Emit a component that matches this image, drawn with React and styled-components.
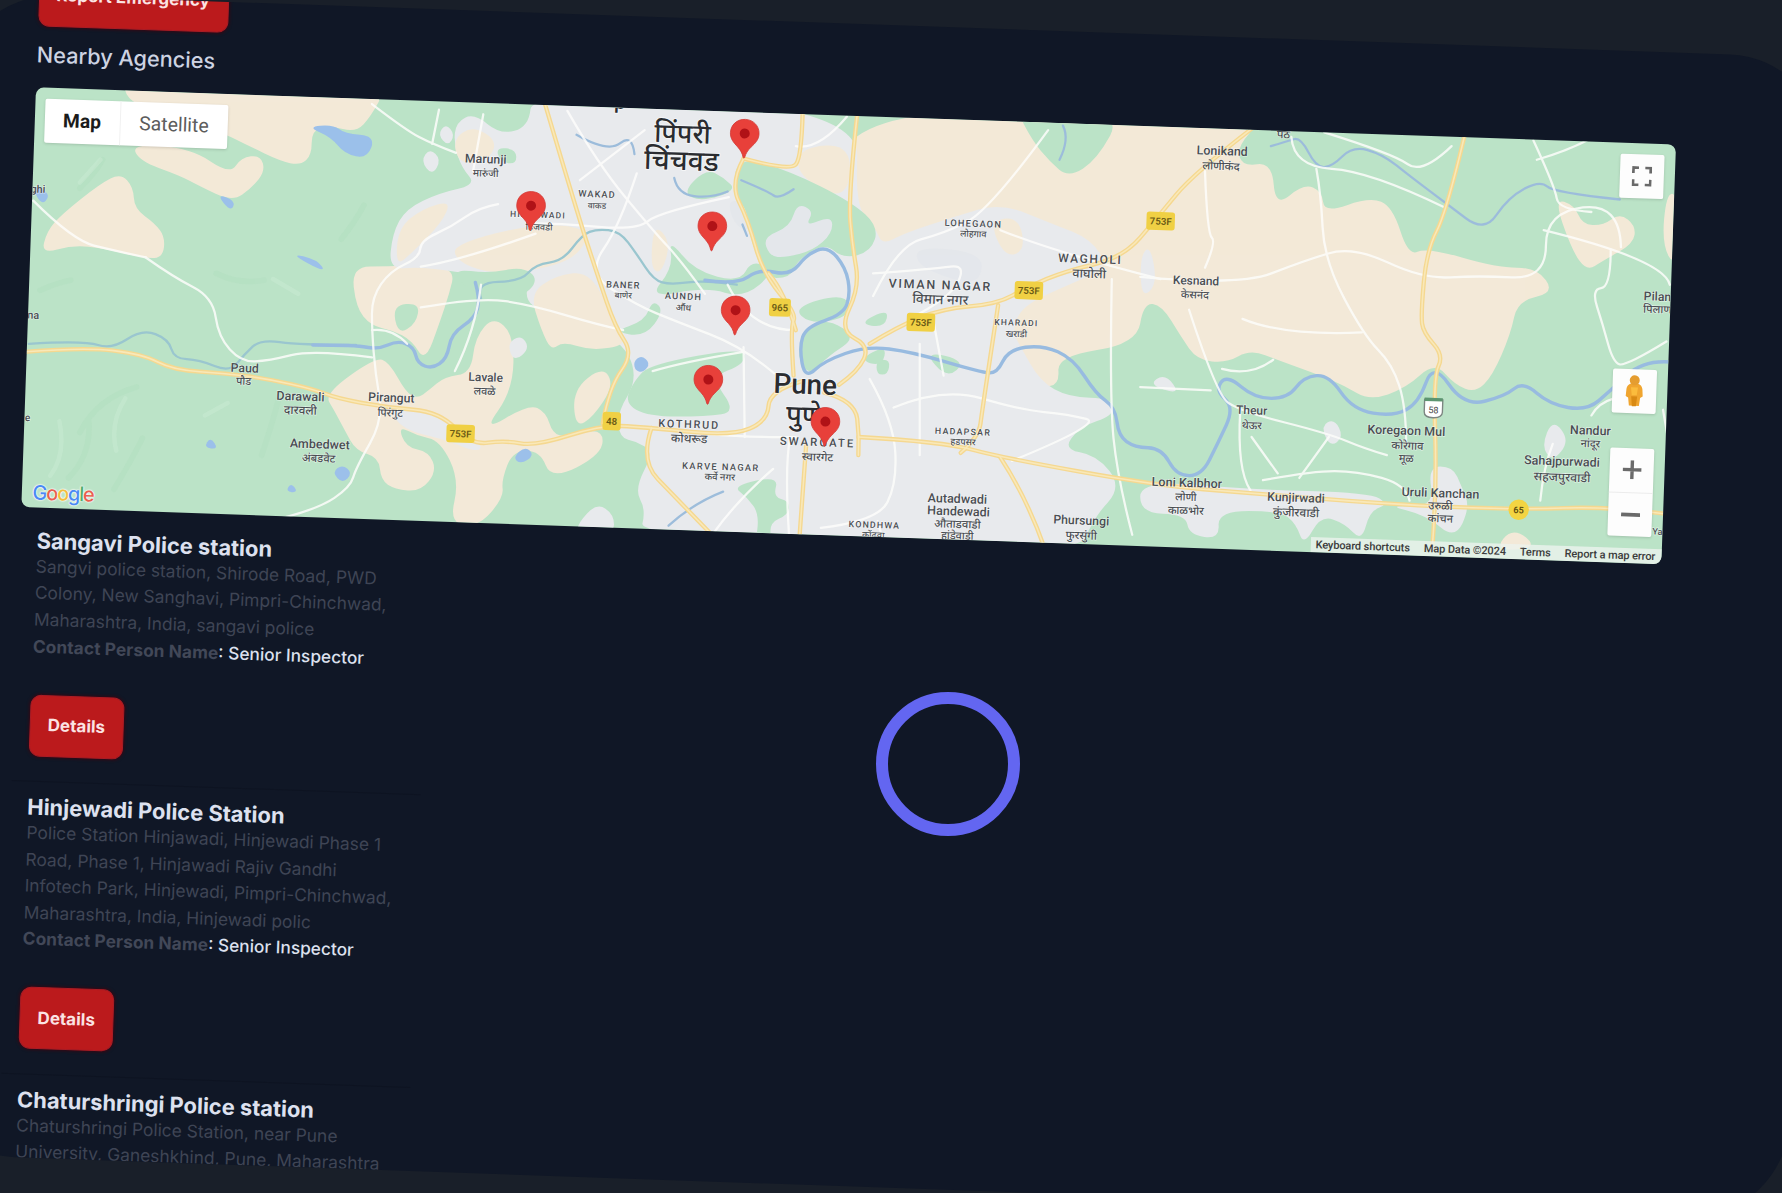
import React from "react";
import styled, { createGlobalStyle } from "styled-components";

const GlobalStyle = createGlobalStyle`
  *, *::before, *::after { box-sizing: border-box; }
  html, body { margin: 0; height: 100%; background: #1a202c; }
`;

const UI_FONT = `Inter, "Liberation Sans", sans-serif`;
const MAP_FONT = `Roboto, "Noto Sans", "Noto Sans Devanagari", sans-serif`;

/* ---------- page shell ---------- */

const Page = styled.main`
  height: 100vh;
  overflow: hidden;
  background: #191f29;
  font-family: ${UI_FONT};
`;

const TiltedPanel = styled.section`
  width: 1868px;
  height: 1162px;
  margin: -6.5px 0 0 -41px;
  padding-left: 79.7px;
  border-radius: 96px;
  overflow: hidden;
  background: #101726;
  transform: rotate(2deg);
  transform-origin: 41px 6.5px;
`;

const Cursor = styled.div`
  position: absolute;
  left: 876.3px;
  top: 692.3px;
  width: 144px;
  height: 144px;
  border: 12px solid #6366f1;
  border-radius: 50%;
`;

const RedButton = styled.button`
  display: flex;
  align-items: center;
  justify-content: center;
  width: ${(p) => p.$width}px;
  height: 62px;
  margin: ${(p) => p.$margin};
  padding: 0 1.5px 1px 0;
  border: 1.5px solid #a91d26;
  border-radius: 11px;
  background: #bb1a1c;
  box-shadow: 0 0 3px 1px rgba(70, 0, 12, 0.7);
  color: #fbe3e3;
  font: 700 17px ${UI_FONT};
`;

const Heading = styled.h2`
  display: flex;
  align-items: center;
  height: 61.4px;
  margin: 0;
  padding-bottom: 4.4px;
  color: #cdd3e2;
  font-size: 21.7px;
  font-weight: 500;
`;

/* ---------- agency cards ---------- */

const AgencyList = styled.div`
  display: flex;
  flex-direction: column;
  width: 409px;
  padding-top: 8.5px;
`;

const AgencyCard = styled.article`
  padding: 12.5px 0 24.8px 16.8px;
  border-bottom: 1px solid #0e1422;
`;

const AgencyName = styled.h3`
  margin: 0;
  color: #dde1ef;
  font-size: 21.9px;
  line-height: 25px;
  font-weight: 700;
  white-space: nowrap;
`;

const Address = styled.p`
  margin: 0;
  color: #3f4555;
  font-size: 17.4px;
  line-height: 26.6px;
  white-space: nowrap;
`;

const AddressLine = styled.span`
  display: block;
`;

const Contact = styled.p`
  margin: 0;
  color: #dde1ef;
  font-size: 17.3px;
  line-height: 26.2px;
  font-weight: 500;
  white-space: nowrap;
`;

const ContactLabel = styled.span`
  color: #424858;
  font-weight: 700;
  letter-spacing: 0.08px;
`;

/* ---------- map ---------- */

const MapFrame = styled.div`
  position: relative;
  width: 1641px;
  height: 420px;
  border-radius: 8px;
  overflow: hidden;
  background: #bbe3c7;
  font-family: ${MAP_FONT};
`;

const MapArt = styled.svg`
  display: block;
  width: 100%;
  height: 100%;
`;

const MapTypeSwitch = styled.div`
  position: absolute;
  left: 10px;
  top: 11.5px;
  display: flex;
  width: 183px;
  height: 44px;
  background: #fff;
  border-radius: 2px;
  box-shadow: 0 1px 3px rgba(0, 0, 0, 0.15);
`;

const MapTypeOption = styled.button`
  width: ${(p) => p.$width}px;
  padding: 0 0 2px;
  border: 0;
  border-left: ${(p) => (p.$active ? "0" : "1px solid #f1f1f1")};
  background: none;
  color: ${(p) => (p.$active ? "#1b1b1b" : "#5c5c5c")};
  font: ${(p) => (p.$active ? 700 : 400)} ${(p) => (p.$active ? 19.2 : 19.4)}px ${MAP_FONT};
`;

const ControlStack = styled.div`
  position: absolute;
  right: 10.4px;
  top: ${(p) => p.$top}px;
  display: flex;
  flex-direction: column;
  width: 44px;
  background: #fdfdfd;
  border-radius: 2px;
  box-shadow: 0 1px 3px rgba(0, 0, 0, 0.15);
`;

const ControlButton = styled.button`
  display: grid;
  place-items: center;
  height: 44px;
  padding: 0;
  border: 0;
  background: none;
  & + & { border-top: 1px solid #ececec; }
`;

const Attribution = styled.div`
  position: absolute;
  right: 0;
  bottom: 0;
  display: flex;
  align-items: center;
  gap: 14px;
  height: 15px;
  padding: 0 6px 0 5px;
  background: rgba(236, 242, 238, 0.8);
  color: #3a3a3a;
  font-size: 11px;
  font-weight: 500;
  letter-spacing: -0.1px;
  white-space: nowrap;
`;

const GoogleMark = styled.div`
  position: absolute;
  left: 11px;
  bottom: 2px;
  font: 500 20px/26px Inter, sans-serif;
  letter-spacing: -1.2px;
  text-shadow: 0 0 2px #fff, 0 0 2px #fff, 0 0 1px #fff;
`;

const Letter = styled.span`
  color: ${(p) => p.$color};
`;

/* Turns a list of points into a softly rounded path through their midpoints. */
function curve(points, closed) {
  const n = points.split(" ").map((p) => p.split(",").map(Number));
  const mid = (a, b) => [(a[0] + b[0]) / 2, (a[1] + b[1]) / 2];
  if (closed) {
    const start = mid(n[n.length - 1], n[0]);
    return (
      `M${start}` +
      n.map((p, i) => `Q${p} ${mid(p, n[(i + 1) % n.length])}`).join("") +
      "Z"
    );
  }
  let d = `M${n[0]}`;
  for (let i = 1; i < n.length - 1; i++) {
    d += `Q${n[i]} ${i === n.length - 2 ? n[i + 1] : mid(n[i], n[i + 1])}`;
  }
  return n.length === 2 ? `M${n[0]}L${n[1]}` : d;
}

const TAN_BACK = [
  "108,66 340,76 326,102 313,116 290,110 274,114 274,136 264,145 246,141 219,128 193,115 112,92",
  "116,126 168,130 202,153 212,138 229,136 233,150 222,164 204,177 175,163 158,154 122,141",
  "36,223 41,203 54,188 88,161 106,152 117,164 118,183 136,196 145,208 143,226 128,227 91,218 64,215",
  "309,234 342,234 372,232 400,237 395,258 387,282 374,318 362,299 345,290 326,286 313,270",
  "285,346 330,314 342,318 357,345 367,350 377,343 391,331 414,328 418,296 434,278 452,294 451,343 424,380 465,355 480,362 486,381 498,384 530,376 530,399 485,422 475,396 451,396 441,422 443,437 421,463 395,460 404,422 387,387 367,383 350,374 357,393 377,397 384,414 370,432 347,430 335,422 333,402 313,396 303,378 294,361",
  "740,90 1110,105 1088,129 1093,146 1119,142 1122,182 1147,161 1163,168 1165,187 1205,173 1225,181 1239,225 1255,217 1317,235 1352,235 1368,257 1335,264 1329,293 1313,330 1298,345 1280,338 1262,318 1237,341 1205,352 1183,339 1162,330 1126,317 1100,307 1079,319 1053,316 1039,296 1022,268 1006,266 1000,302 930,313 932,338 915,340 860,320 760,300 740,200",
  "1367,174 1385,180 1392,197 1410,198 1425,187 1439,198 1437,214 1410,229 1396,238 1383,220",
  "1466,170 1476,170 1474,236 1462,214",
  "1314,484 1331,463 1354,482",
];

const URBAN = [
  "468,80 756,95 752,180 770,200 776,215 795,205 840,190 880,178 925,196 960,210 975,235 940,250 900,268 890,290 898,305 915,335 940,349 978,350 980,365 950,375 935,395 965,400 987,428 962,455 948,490 562,472 568,448 558,430 575,397 560,388 545,385 543,362 560,335 552,306 520,285 478,275 460,262 470,236 431,243 370,234 342,237 345,205 357,183 387,169 419,162 406,147 399,126 401,107 417,99 440,118 465,111",
  "1003,422 1097,430 1205,433 1222,443 1205,449 1198,476 1183,460 1162,453 1147,480 1140,460 1126,449 1071,449 1073,474 1046,470 1043,452 1003,451",
  "1219,444 1262,446 1256,410 1278,410 1286,428 1293,446 1280,474 1255,453",
  "1010,338 1025,328 1039,347",
  "1162,374 1174,368 1182,384 1170,393",
  "1356,392 1366,368 1381,387 1366,406",
  "508,460 525,442 540,452 540,470 508,470",
  "1003,225 1012,215 1018,250 1004,262",
  "340,358 380,362 425,390 420,398 388,385 355,378",
  "385,118 392,108 400,118 394,128",
  "370,141 378,130 388,140 380,154",
  "446,302 458,294 466,306 452,318",
];

const TAN_FRONT = [
  "703,129 750,126 745,178 701,154",
  "350,200 372,183 397,176 388,196 362,222 348,234",
  "400,214 470,196 520,200 508,226 470,238 428,240 400,228",
  "466,258 488,242 520,238 541,286 552,303 520,308 495,300 485,308 476,290",
  "504,342 530,322 540,338 522,366 506,376",
  "575,196 590,212 582,240 572,236",
  "870,194 896,190 902,220 884,226",
  "398,122 416,110 438,124 428,142 404,144",
];

const PARKS = [
  "650,137 695,150 749,177 773,199 766,221 742,227 725,213 701,229 695,244 671,244 659,202 644,165",
  "600,169 621,148 637,156 648,167 617,177",
  "588,209 611,238 651,248 661,228 682,238 654,262 621,252 570,262 592,235",
  "539,291 567,282 574,263 584,273 567,296",
  "572,320 655,305 655,320 625,331 648,362 621,366 570,366 549,354 558,334",
  "644,427 685,418 680,437 694,440 694,452 676,460 680,480 664,480 668,452 657,437",
  "707,288 728,280 754,296 728,313 712,330 701,314",
  "697,270 744,257 749,278 713,285",
  "771,316 783,316 781,329 771,329",
  "812,308 850,317 833,333",
  "755,316 780,303 776,322",
  "755,284 782,271 778,288",
  "893,94 988,98 965,140 940,156 923,141 908,123",
  "436,129 454,131 454,144 440,142",
  "345,268 369,266 366,284 350,294",
  "398,236 430,240 460,234 474,246 458,262 432,262 408,252",
];

const CLEARINGS = [
  "671,208 695,199 701,178 716,185 708,199 732,189 732,205 715,220 691,226 677,225",
  "807,216 865,222 862,248 838,246 806,232",
  "640,175 655,178 660,205 645,196",
];

const LAKES = [
  "270,111 293,109 303,117 330,119 323,139 303,135 291,120",
  "190,170 207,176 203,186",
  "254,222 279,228 287,240",
  "557,318 564,312 572,319 566,327 559,326",
  "292,415 301,408 310,416 301,425",
  "179,393 185,384 192,395",
  "451,402 462,392 470,400 458,408",
  "28,164 35,164 44,172 36,180",
  "251,432 256,424 262,433",
];

const UPPER_RIVERS = [
  "25,302 74,299 98,307 125,289 148,298 153,315 175,316 202,327 215,311 229,298 263,303 313,303",
  "423,262 418,248 458,247 471,232 495,229 512,206 525,201 545,203 560,223 575,246 590,250 620,246 648,250",
];

const RIVERS = [
  "275,303 313,303 332,307 350,299 364,305 367,319 380,324 393,315 397,293 418,279 422,262 418,248",
  "620,246 648,250 668,236 695,242 710,223 728,216 744,235 748,258 742,276 709,287 703,305 708,333 725,317 762,304 802,309 863,327 877,328 887,307 917,303 944,315 964,346 981,358 984,383 998,393 1022,394 1035,418 1057,418 1071,390 1086,358 1069,343 1079,329 1104,350 1133,350 1147,331 1169,329 1190,360 1226,366 1248,354 1261,318 1288,357 1324,348 1340,335 1363,355 1396,361 1417,343 1446,316 1470,318",
];

const STREAMS = [
  "507,118 535,134 556,117 558,135",
  "593,156 596,170 625,174 640,168",
  "652,158 676,168 685,175 698,166",
  "935,110 941,122 932,140",
  "588,462 610,442 636,432",
  "653,197 657,207",
  "1118,128 1132,124 1144,120 1158,147 1172,146 1190,128 1216,135 1241,155 1273,179 1306,204 1327,173 1355,158 1367,169 1425,175",
];

const WHITE_ROADS = [
  "128,226 152,243 187,261 192,296 212,318 236,317 276,307 327,314",
  "438,179 421,182 397,199 370,211 369,226 343,238 327,261 327,290 330,328 337,369 313,411 308,428 280,447 249,455",
  "471,205 404,229 370,234",
  "327,290 345,288 358,302",
  "370,270 421,261 468,268 525,285 548,290",
  "327,91 357,114 380,126 401,134",
  "386,96 380,126",
  "425,100 416,150",
  "29,176 64,211 101,220 128,226",
  "499,97 526,144 574,202 600,230 620,258",
  "567,114 510,158",
  "464,196 493,196 560,202 580,186 641,173",
  "560,152 545,198 516,240 560,268 594,282 654,305 681,328",
  "423,250 418,290 400,326",
  "654,305 655,384",
  "574,326 600,318 654,309",
  "580,375 630,385 700,384",
  "695,384 690,410 694,470",
  "680,412 648,440 628,468",
  "722,464 772,458 789,425 786,370 765,333",
  "772,458 778,480",
  "809,302 809,400",
  "786,358 830,340 897,360 940,364 971,372 890,405",
  "768,260 790,215 830,205 870,185 922,114",
  "880,202 930,222 1021,245",
  "768,240 822,236 850,232 836,262 800,280",
  "820,276 830,330",
  "640,250 660,290 700,290",
  "745,102 720,132 700,128",
  "978,245 976,350 983,420 996,470",
  "1003,243 1090,251 1147,229 1190,216 1252,245 1300,242 1360,245 1360,186 1425,178 1426,217",
  "1417,219 1417,252 1400,254 1410,285 1419,318 1430,322 1466,300",
  "1358,202 1464,228 1469,250",
  "1349,123 1368,164 1371,184 1400,186",
  "1352,140 1380,132 1402,120",
  "1165,116 1226,135 1251,153 1277,128",
  "1136,120 1138,146 1205,150 1271,182",
  "1158,148 1162,170 1165,229 1200,295 1225,320 1237,358 1237,390",
  "1060,150 1062,205 1070,212 1060,235",
  "1046,272 1070,346 1090,361 1169,381 1200,394 1220,400",
  "1093,280 1129,295 1198,292",
  "1003,340 1065,343",
  "1075,324 1100,331 1120,316",
  "1091,361 1088,413 1100,431",
  "1101,384 1124,416",
  "1169,384 1143,420",
  "1111,422 1154,414 1194,414 1237,426 1240,440",
  "1400,365 1406,354 1420,350",
  "1355,440 1358,410 1366,390",
  "1463,360 1470,400",
];

const YELLOW_ROADS = [
  "22,309 74,305 125,311 152,325 199,328 236,333 276,342 296,350 340,358 387,362 414,391 444,387 471,392 530,373 573,376 644,383 675,370 677,343 705,335",
  "479,90 508,188 526,243 541,287 557,311 536,340 530,372",
  "573,376 563,405 594,437 626,470",
  "654,139 695,150 705,138 706,98",
  "654,139 642,161 658,193 671,240 701,276 695,287 698,330",
  "676,240 690,256 700,290",
  "754,100 746,173 750,217 756,252 738,290 765,304 755,326 738,338",
  "765,302 789,287 829,271 877,267 904,252 937,238 988,226 1018,191 1050,152 1102,112",
  "755,384 829,388 880,402 1020,427 1097,433 1219,443 1335,448 1417,445 1468,452",
  "880,402 903,437 919,482",
  "878,268 864,360 861,384 845,398",
  "709,392 703,475",
  "725,345 752,352 756,384 755,400",
  "1290,112 1273,185 1255,220 1250,276 1252,292 1270,312 1261,331 1264,428 1260,482",
];

const LABELS = [
  [427, 143, "Marunji", 10.8],
  [427, 155, "मारुंजी", 9],
  [473, 191, "HINJAWADI", 7.5, 1],
  [474, 202, "हिंजवडी", 8],
  [525, 173, "WAKAD", 8.2, 0.9],
  [525, 183, "वाकड", 7.5],
  [548, 253, "BANER", 8.2, 0.8],
  [548, 262, "बाणेर", 7.5],
  [601, 263, "AUNDH", 8.2, 1],
  [601, 273, "औंध", 8],
  [856, 199, "LOHEGAON", 8.2, 1],
  [856, 208, "लोहगाव", 8],
  [959, 231, "WAGHOLI", 10.6, 1.4],
  [958, 244, "वाघोली", 11],
  [1075, 136, "Lonikand", 11],
  [1074, 149, "लोणीकंद", 10],
  [1129, 121, "पेठ", 10],
  [1052, 250, "Kesnand", 10.5],
  [1051, 262, "केसनंद", 9.5],
  [827, 254, "VIMAN NAGAR", 11, 1.5],
  [827, 267, "विमान नगर", 12],
  [894, 286, "KHARADI", 7.5, 1],
  [894, 296, "खराडी", 8],
  [215, 327, "Paud", 10.8],
  [214, 338, "पौड", 9.5],
  [264, 352, "Darawali", 11],
  [264, 364, "दारवली", 10.5],
  [344, 353, "Pirangut", 10.8],
  [343, 366, "पिरंगुट", 9.5],
  [427, 335, "Lavale", 10.5],
  [426, 347, "लवळे", 9.5],
  [281, 394, "Ambedwet", 11],
  [280, 406, "अंबडवेट", 9.8],
  [606, 376, "KOTHRUD", 9.5, 1.6],
  [606, 389, "कोथरूड", 10.5],
  [634, 413, "KARVE NAGAR", 8.2, 1.2],
  [633, 422, "कर्वे नगर", 8.5],
  [719, 392, "SWARGATE", 10, 1.8],
  [719, 405, "स्वारगेट", 10],
  [847, 382, "HADAPSAR", 7.8, 1.1],
  [847, 391, "हडपसर", 8],
  [769, 464, "KONDHWA", 7.8, 1],
  [768, 473, "कोंढवा", 8],
  [842, 442, "Autadwadi", 11],
  [843, 453, "Handewadi", 11],
  [842, 464, "औताडवाडी", 10],
  [842, 474, "हांडेवाडी", 9.5],
  [951, 461, "Phursungi", 10.8],
  [951, 474, "फुरसुंगी", 10],
  [1101, 364, "Theur", 10.5],
  [1101, 377, "थेऊर", 9.5],
  [1044, 428, "Loni Kalbhor", 11],
  [1043, 440, "लोणी", 9.5],
  [1043, 452, "काळभोर", 9.8],
  [1140, 441, "Kunjirwadi", 10.8],
  [1140, 454, "कुंजीरवाडी", 10.5],
  [1237, 382, "Koregaon Mul", 11],
  [1238, 395, "कोरेगाव", 9.8],
  [1237, 406, "मूळ", 9.5],
  [1267, 437, "Uruli Kanchan", 11],
  [1267, 448, "उरुळी", 9.8],
  [1267, 459, "कांचन", 9.8],
  [1399, 382, "Nandur", 11],
  [1399, 393, "नांदूर", 9.5],
  [1374, 409, "Sahajpurwadi", 11],
  [1374, 423, "सहजपुरवाडी", 10.8],
  [1458, 264, "Pilan", 10.8],
  [1458, 275, "पिलाण", 9.8],
  [33, 169, "ghi", 9.5],
  [29, 280, "na", 9.5],
  [24, 370, "e", 9],
  [1458, 470, "Ya", 8],
];

const CITY_LABELS = [
  [600, 125, "पिंपरी", 23.5],
  [599, 149, "चिंचवड", 24.5],
  [708, 346, "Pune", 24.5],
  [707, 373, "पुणे", 24],
  [545, 95, "p", 18],
];

const SHIELDS = [
  [1021, 194, "753F", 25],
  [905, 255, "753F", 25],
  [810, 283, "753F", 25],
  [405, 381, "753F", 25],
  [686, 270, "965", 19],
  [538, 370, "48", 16],
];

const PINS = [
  [655, 117.5],
  [467, 181],
  [626.5, 199],
  [647, 273],
  [623, 334],
  [726, 371],
];

function Pin({ x, y }) {
  return (
    <g transform={`translate(${x} ${y}) rotate(2)`}>
      <path
        d="M0-13C-7.3-13-12.6-7.6-12.6-.8-12.6 4.6-9.4 7.8-6 11.2-3 14.4-1.5 17-.7 20.4-.5 21.4.5 21.4.7 20.4 1.5 17 3 14.4 6 11.2 9.4 7.8 12.6 4.6 12.6-.8 12.6-7.6 7.3-13 0-13Z"
        fill="#e8403a"
        stroke="#d23a36"
        strokeWidth="0.7"
      />
      <circle cy="-.6" r="4.4" fill="#b01217" />
    </g>
  );
}

function PlaceLabel({ x, y, text, size, spacing = 0, strong }) {
  return (
    <text
      transform={`translate(${x} ${y}) rotate(2)`}
      textAnchor="middle"
      fontSize={size}
      letterSpacing={spacing}
      fontWeight={strong ? 500 : 500}
      fill={strong ? "#2a2c30" : "#4a4e53"}
      stroke="#fff"
      strokeWidth={strong ? 1.5 : 1}
      strokeOpacity="0.6"
      paintOrder="stroke"
    >
      {text}
    </text>
  );
}

function Areas({ items, fill }) {
  return items.map((p) => <path key={p} d={curve(p, true)} fill={fill} />);
}

function Lines({ items, color, width, opacity = 1 }) {
  return (
    <g fill="none" stroke={color} strokeWidth={width} strokeLinejoin="round" strokeLinecap="round" opacity={opacity}>
      {items.map((p) => (
        <path key={p} d={curve(p, false)} />
      ))}
    </g>
  );
}

function PuneMap() {
  return (
    <MapArt viewBox="0 0 1641 420" aria-label="Map of Pune">
      {/* geography is authored north-up, so the tilt of the frame is undone here */}
      <g transform="translate(-38.7 -85.4) rotate(-2) scale(1.1365)">
        <g fill="none" stroke="#a9d8b8" strokeWidth="5" opacity=".18" strokeLinecap="round">
          <path d="M70 380Q85 350 120 340M60 420Q80 400 78 370M100 430Q118 400 125 385M230 400Q240 370 245 350M300 210Q312 195 320 180M35 255Q50 248 62 246M190 240Q210 250 232 246M70 165Q85 150 90 140" />
        </g>
        <g fill="none" stroke="#cdebd5" strokeWidth="4" opacity=".45" strokeLinecap="round">
          <path d="M52 370Q58 400 44 418M110 350Q96 372 102 396M240 245L262 258M70 160L88 140M180 365L200 354M64 110L84 90" />
        </g>
        <Areas items={TAN_BACK} fill="#f3e9d8" />
        <Areas items={URBAN} fill="#e8eaed" />
        <Areas items={TAN_FRONT} fill="#f3e9d8" />
        <Areas items={PARKS} fill="#bbe3c7" />
        <Areas items={CLEARINGS} fill="#e4e7ec" />
        <Areas items={LAKES} fill="#9cc0ea" />
        <Lines items={UPPER_RIVERS} color="#9ac6cf" width={2} />
        <Lines items={RIVERS} color="#98bbe0" width={3} />
        <Lines items={STREAMS} color="#9dbddb" width={2} />
        <Lines items={WHITE_ROADS} color="#fdfdfb" width={2} opacity={0.85} />
        <Lines items={YELLOW_ROADS} color="#f5d890" width={3.8} />
        <Lines items={YELLOW_ROADS} color="#f9e8b8" width={1.4} />

        {SHIELDS.map(([x, y, text, w]) => (
          <g key={`${x}-${y}`} transform={`translate(${x} ${y}) rotate(2)`}>
            <rect x={-w / 2} y="-8" width={w} height="16" rx="2.5" fill="#f0d044" />
            <text textAnchor="middle" y="3.2" fontSize="8.5" fontWeight="600" fill="#6b5b16">
              {text}
            </text>
          </g>
        ))}
        <g transform="translate(1336 448) rotate(2)">
          <circle r="9" fill="#f3d442" />
          <text textAnchor="middle" y="3" fontSize="8" fontWeight="600" fill="#5b4c10">
            65
          </text>
        </g>
        <g transform="translate(1261 359) rotate(2)">
          <path d="M-8-8H8V3Q8 8 0 8T-8 3Z" fill="#fff" stroke="#7c8581" strokeWidth="1.2" />
          <path d="M-8-8H8" stroke="#5c9570" strokeWidth="3" />
          <text textAnchor="middle" y="4" fontSize="8" fill="#444">
            58
          </text>
        </g>

        {LABELS.map(([x, y, text, size, spacing]) => (
          <PlaceLabel key={text + x} x={x} y={y} text={text} size={size} spacing={spacing} />
        ))}
        {CITY_LABELS.map(([x, y, text, size]) => (
          <PlaceLabel key={text} x={x} y={y} text={text} size={size} strong />
        ))}
        {PINS.map(([x, y]) => (
          <Pin key={`${x}-${y}`} x={x} y={y} />
        ))}
      </g>
    </MapArt>
  );
}

const GOOGLE = [
  ["G", "#4a8af4"],
  ["o", "#e8604f"],
  ["o", "#f3be3c"],
  ["g", "#4a8af4"],
  ["l", "#4fae6a"],
  ["e", "#e8604f"],
];

function AgencyMap() {
  return (
    <MapFrame>
      <PuneMap />
      <MapTypeSwitch>
        <MapTypeOption $active $width={75}>Map</MapTypeOption>
        <MapTypeOption $width={108}>Satellite</MapTypeOption>
      </MapTypeSwitch>
      <ControlStack $top={11}>
        <ControlButton aria-label="Fullscreen">
          <svg width="20" height="20" viewBox="0 0 22 22" fill="none" stroke="#6a6a6a" strokeWidth="3">
            <path d="M1.5 7.5v-6h6M14.5 1.5h6v6M20.5 14.5v6h-6M7.5 20.5h-6v-6" />
          </svg>
        </ControlButton>
      </ControlStack>
      <ControlStack $top={226.5}>
        <ControlButton aria-label="Street View">
          <svg width="20" height="34" viewBox="0 0 20 34">
            <path d="M10 9C5 9 2.5 11 2 15L1.5 22 4 23.5 5 31.5H15L16 23.5 18.5 22 18 15C17.5 11 15 9 10 9Z" fill="#f0a52f" />
            <path d="M7 22 8 32H12L13 22Z" fill="#d98a14" />
            <circle cx="10" cy="6" r="5" fill="#e59d30" />
            <path d="M6.5 13H13.5L12.5 21H7.5Z" fill="#fbbc3d" />
          </svg>
        </ControlButton>
      </ControlStack>
      <ControlStack $top={305}>
        <ControlButton aria-label="Zoom in">
          <svg width="19" height="19" viewBox="0 0 20 20" stroke="#6a6a6a" strokeWidth="3.6">
            <path d="M10 0V20M0 10H20" />
          </svg>
        </ControlButton>
        <ControlButton aria-label="Zoom out">
          <svg width="19" height="19" viewBox="0 0 20 20" stroke="#6a6a6a" strokeWidth="4">
            <path d="M0 10H20" />
          </svg>
        </ControlButton>
      </ControlStack>
      <GoogleMark>
        {GOOGLE.map(([char, color], i) => (
          <Letter key={i} $color={color}>{char}</Letter>
        ))}
      </GoogleMark>
      <Attribution>
        <span>Keyboard shortcuts</span>
        <span>Map Data ©2024</span>
        <span>Terms</span>
        <span>Report a map error</span>
      </Attribution>
    </MapFrame>
  );
}

const AGENCIES = [
  {
    name: "Sangavi Police station",
    address: [
      "Sangvi police station, Shirode Road, PWD",
      "Colony, New Sanghavi, Pimpri-Chinchwad,",
      "Maharashtra, India, sangavi police",
    ],
    contact: "Senior Inspector",
  },
  {
    name: "Hinjewadi Police Station",
    address: [
      "Police Station Hinjawadi, Hinjewadi Phase 1",
      "Road, Phase 1, Hinjawadi Rajiv Gandhi",
      "Infotech Park, Hinjewadi, Pimpri-Chinchwad,",
      "Maharashtra, India, Hinjewadi polic",
    ],
    contact: "Senior Inspector",
  },
  {
    name: "Chaturshringi Police station",
    address: [
      "Chaturshringi Police Station, near Pune",
      "University, Ganeshkhind, Pune, Maharashtra",
    ],
  },
];

function Agency({ name, address, contact }) {
  return (
    <AgencyCard>
      <AgencyName>{name}</AgencyName>
      <Address>
        {address.map((line) => (
          <AddressLine key={line}>{line}</AddressLine>
        ))}
      </Address>
      {contact && (
        <>
          <Contact>
            <ContactLabel>Contact Person Name</ContactLabel>: {contact}
          </Contact>
          <RedButton $width={94} $margin="34.8px 0 0">Details</RedButton>
        </>
      )}
    </AgencyCard>
  );
}

export default function App() {
  return (
    <Page>
      <GlobalStyle />
      <TiltedPanel>
        <RedButton $width={190} $margin="-31.5px 0 0">Report Emergency</RedButton>
        <Heading>Nearby Agencies</Heading>
        <AgencyMap />
        <AgencyList>
          {AGENCIES.map((agency) => (
            <Agency key={agency.name} {...agency} />
          ))}
        </AgencyList>
      </TiltedPanel>
      <Cursor />
    </Page>
  );
}
